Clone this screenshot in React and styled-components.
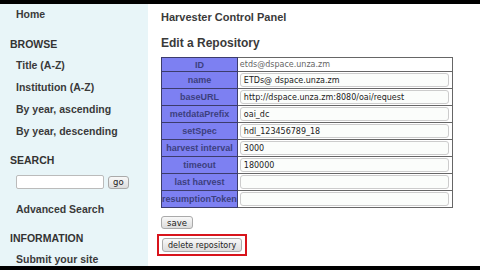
import React from "react"
import styled, { createGlobalStyle } from "styled-components"

const GlobalStyle = createGlobalStyle`
  html, body {
    margin: 0;
    padding: 0;
    background: #000;
  }
  body {
    font-family: "Liberation Sans", Arial, sans-serif;
  }
`

const Screen = styled.div`
  width: 480px;
  height: 270px;
  overflow: hidden;
  background: #000;
  display: flex;
  flex-direction: column;
`

const Page = styled.div`
  margin-top: 4px;
  height: 262px;
  display: flex;
  background: #fff;
  overflow: hidden;
`

const Sidebar = styled.nav`
  width: 148px;
  flex: none;
  background: #e8f5f8;
  padding-top: 4px;
  box-sizing: border-box;
`

const NavLink = styled.div`
  padding-left: 16px;
  height: 22px;
  font-size: 10.5px;
  font-weight: bold;
  color: #3a3a3a;
  margin-bottom: ${props => props.$after || 0}px;
`

const Section = styled.div`
  padding-left: 10px;
  height: 21px;
  font-size: 10.5px;
  font-weight: bold;
  color: #333;
`

const SearchRow = styled.div`
  display: flex;
  align-items: center;
  gap: 4px;
  padding-left: 16px;
  height: 14px;
  margin-bottom: 14px;
`

const SearchInput = styled.div`
  width: 86px;
  height: 12px;
  background: #fff;
  border: 1px solid #bbb;
  border-radius: 2px;
`

const Button = styled.div`
  display: inline-flex;
  align-items: center;
  justify-content: center;
  height: ${props => props.$tall ? 12 : 11}px;
  padding: 0 ${props => props.$pad || 5}px;
  font-family: "DejaVu Sans", sans-serif;
  font-size: ${props => props.$size || 8.5}px;
  color: #222;
  background: linear-gradient(#f8f8f8, #dcdcdc);
  border: 1px solid #aaa;
  border-radius: 3px;
`

const Main = styled.main`
  flex: 1;
  padding: 7px 0 0 13px;
`

const PanelTitle = styled.div`
  font-size: 11px;
  font-weight: bold;
  color: #3a3a3a;
  height: 25px;
`

const SubTitle = styled.div`
  font-size: 12px;
  font-weight: bold;
  color: #3a3a3a;
  height: 21px;
`

const Table = styled.table`
  border-collapse: collapse;
  width: 292px;
  border: 1px solid #666;
`

const Label = styled.th`
  width: 71px;
  height: ${props => (props.$first ? 13 : 16)}px;
  padding: 0;
  background: #7d80f2;
  border: 1px solid #3c3c6c;
  font-size: 9px;
  font-weight: bold;
  color: #3c3f7e;
  text-align: center;
  white-space: nowrap;
`

const Value = styled.td`
  padding: 0 3px 0 2px;
  border: 1px solid #666;
  font-family: "DejaVu Sans", sans-serif;
  font-size: 8px;
  color: #666;
`

const Field = styled.div`
  height: 12px;
  display: flex;
  align-items: center;
  padding-left: 3px;
  border: 1px solid #ccc;
  border-radius: 3px;
  background: #fbfdfb;
  font-family: "DejaVu Sans", sans-serif;
  font-size: 8px;
  color: #222;
`

const Actions = styled.div`
  display: flex;
  flex-direction: column;
  align-items: flex-start;
  gap: 5px;
  margin-top: 8px;
`

const Highlight = styled.div`
  display: flex;
  margin-left: -4px;
  padding: 2px 3px;
  border: 2px solid #d8141c;
`

const rows = [
  ["name", "ETDs@ dspace.unza.zm"],
  ["baseURL", "http://dspace.unza.zm:8080/oai/request"],
  ["metdataPrefix", "oai_dc"],
  ["setSpec", "hdl_123456789_18"],
  ["harvest interval", "3000"],
  ["timeout", "180000"],
  ["last harvest", ""],
  ["resumptionToken", ""],
]

const App = () => {
  return (
    <Screen>
      <GlobalStyle />
      <Page>
        <Sidebar>
          <NavLink $after={8}>Home</NavLink>
          <Section>BROWSE</Section>
          <NavLink>Title (A-Z)</NavLink>
          <NavLink>Institution (A-Z)</NavLink>
          <NavLink>By year, ascending</NavLink>
          <NavLink $after={7}>By year, descending</NavLink>
          <Section>SEARCH</Section>
          <SearchRow>
            <SearchInput />
            <Button $pad={4}>go</Button>
          </SearchRow>
          <NavLink $after={7}>Advanced Search</NavLink>
          <Section>INFORMATION</Section>
          <NavLink>Submit your site</NavLink>
        </Sidebar>
        <Main>
          <PanelTitle>Harvester Control Panel</PanelTitle>
          <SubTitle>Edit a Repository</SubTitle>
          <Table>
            <tbody>
              <tr>
                <Label $first>ID</Label>
                <Value>etds@dspace.unza.zm</Value>
              </tr>
              {rows.map(([label, value]) => (
                <tr key={label}>
                  <Label>{label}</Label>
                  <Value>
                    <Field>{value}</Field>
                  </Value>
                </tr>
              ))}
            </tbody>
          </Table>
          <Actions>
            <Button>save</Button>
            <Highlight>
              <Button $pad={5} $size={8} $tall>delete repository</Button>
            </Highlight>
          </Actions>
        </Main>
      </Page>
    </Screen>
  )
}

export default App
